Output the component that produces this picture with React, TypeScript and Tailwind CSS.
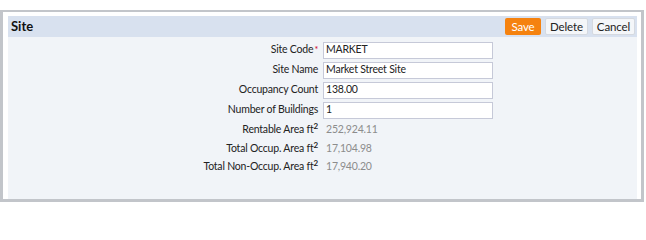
import React from 'react';

const font = { fontFamily: 'Lato, "Open Sans", sans-serif' };

const inputs = [
  { label: 'Site Code', value: 'MARKET', required: true },
  { label: 'Site Name', value: 'Market Street Site' },
  { label: 'Occupancy Count', value: '138.00' },
  { label: 'Number of Buildings', value: '1' },
];

const readOnly = [
  { label: 'Rentable Area', value: '252,924.11' },
  { label: 'Total Occup. Area', value: '17,104.98' },
  { label: 'Total Non-Occup. Area', value: '17,940.20' },
];

export default function App() {
  return (
    <div className="w-[646px] h-[202px] bg-white overflow-hidden pt-[10px]" style={font}>
      {/* Dialog window */}
      <div className="w-[644px] h-[192px] flex flex-col bg-white border-t-2 border-l-[3px] border-r-[3px] border-b-[3px] border-[#c2c5ca] pt-[4px] pl-[5px] pr-[4px]">
        {/* Header */}
        <div className="h-[21px] shrink-0 flex items-center justify-between bg-[#d8e1ef] pl-[3px] pr-[2px]">
          <span className="text-[13px] font-bold text-[#111]">Site</span>
          <div className="flex items-center gap-[4px] text-[11.5px] tracking-[-0.1px]">
            <button className="h-[17px] w-[36px] rounded-[2px] bg-[#f5820f] text-white leading-none">
              Save
            </button>
            <button className="h-[17px] w-[43px] rounded-[2px] bg-[#f4f6f9] border border-[#d5d9e0] text-[#222] leading-none">
              Delete
            </button>
            <button className="h-[17px] w-[43px] rounded-[2px] bg-[#f4f6f9] border border-[#d5d9e0] text-[#222] leading-none">
              Cancel
            </button>
          </div>
        </div>

        {/* Body */}
        <div className="flex-1 bg-[#f1f4f8] pt-[3px]">
          <div className="grid grid-cols-[310px_170px] gap-x-[5px] text-[10.5px] tracking-[-0.2px]">
            {inputs.map((row) => (
              <React.Fragment key={row.label}>
                <div className="h-[20px] flex items-center justify-end text-[#222]">
                  {row.label}
                  {row.required && <span className="text-[#d0021b] text-[9px] self-start mt-[3px] ml-[1px]">*</span>}
                </div>
                <div className="h-[20px] flex items-center">
                  <div className="w-full h-[17px] bg-white border border-[#c6c9d8] flex items-center px-[2px] text-[#222]">
                    {row.value}
                  </div>
                </div>
              </React.Fragment>
            ))}
            <div className="col-span-2 h-[1px]" />
            {readOnly.map((row) => (
              <React.Fragment key={row.label}>
                <div className="h-[18.5px] flex items-center justify-end text-[#222]">
                  {row.label}&nbsp;ft<sup className="text-[8px] font-bold">2</sup>
                </div>
                <div className="h-[18.5px] flex items-center pl-[3px] text-[#8c8c8c]">{row.value}</div>
              </React.Fragment>
            ))}
          </div>
        </div>
      </div>
    </div>
  );
}
